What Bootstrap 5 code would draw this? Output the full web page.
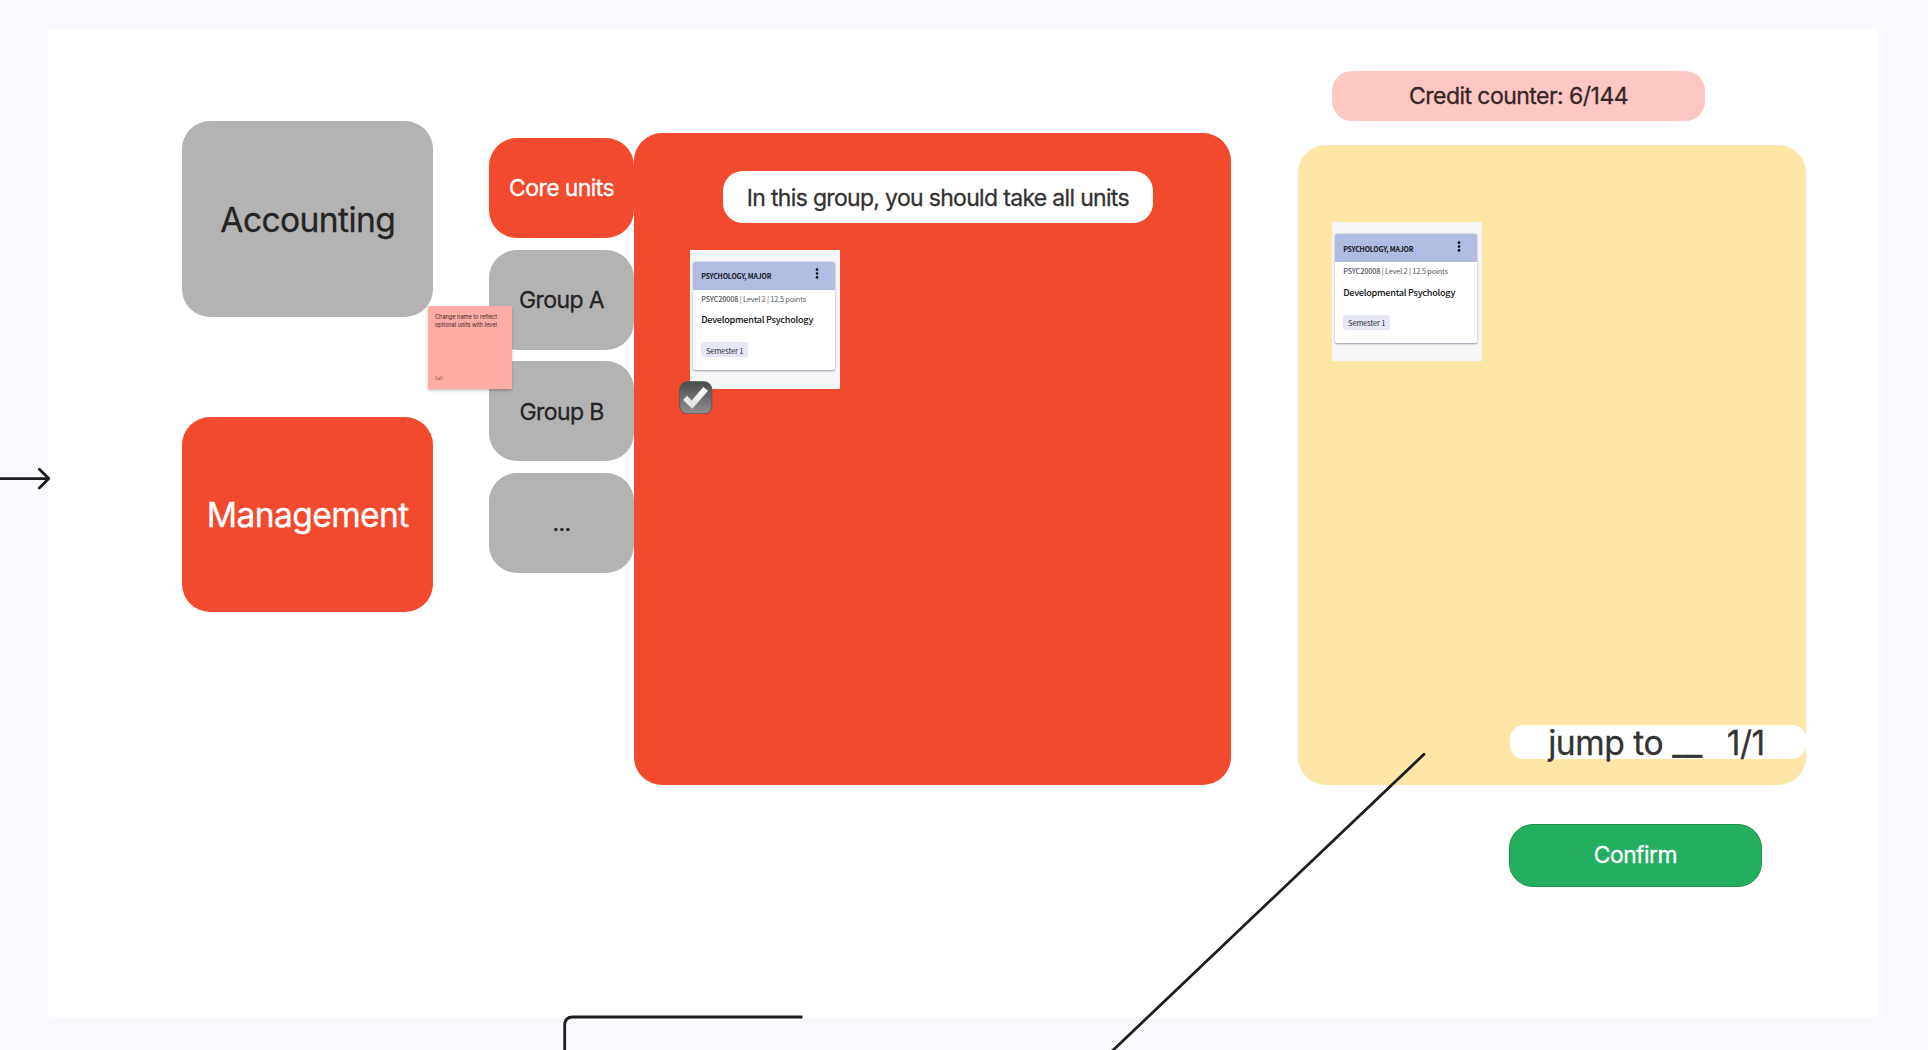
<!DOCTYPE html>
<html lang="en">
<head>
<meta charset="utf-8">
<meta name="viewport" content="width=device-width, initial-scale=1">
<title>Course planner board</title>
<link href="https://cdn.jsdelivr.net/npm/bootstrap@5.3.0/dist/css/bootstrap.min.css" rel="stylesheet">
<style>
  body { background: #faf7ff; font-family: Inter, "Liberation Sans", sans-serif; color: #242424; width: 1928px; height: 1050px; }
  .majors, .groups, .hint, .counter, .pager, .confirm { -webkit-text-stroke: .3px currentColor; }
  .board { margin: 29px 49.6px 0 48.3px; height: 988px; background: #fff; border-radius: 2px; padding-left: 134px; }
  .tile { border-radius: 28px; line-height: 1; white-space: nowrap; }
  .tile-gray { background: #b3b3b3; }
  .tile-red { background: #f24a2e; color: #fff; }
  .majors { width: 251px; margin-top: 92.3px; gap: 100.5px; }
  .majors .tile { height: 195.3px; font-size: 33.6px; letter-spacing: -.6px; padding-top: 1px; }
  .groups { width: 145px; margin: 109px 0 0 55.8px; gap: 11.3px; }
  .groups .tile { height: 100.3px; font-size: 23px; letter-spacing: -.6px; padding-top: 1.6px; }
  .units { width: 597.2px; height: 652.8px; margin-top: 103.6px; padding: 38.8px 0 0 55.6px; }
  .hint { width: 429.6px; height: 52px; margin-left: 33.4px; padding-top: 1.6px; border-radius: 20px; background: #fff; color: #333; font-size: 23px; letter-spacing: -.68px; line-height: 1; }
  .shot { width: 150.7px; height: 139.3px; background: #f6f6f7; padding: 12.3px 5.5px 0 3.5px; font-family: "Noto Sans CJK SC", sans-serif; color: #141418; }
  .units .shot { margin-top: 26.4px; }
  .unit { height: 108.3px; border-radius: 2.5px; background: #fff; box-shadow: 0 .7px 2px #68718fb0; overflow: hidden; line-height: 1; white-space: nowrap; letter-spacing: 0; }
  .unit-top { height: 28px; background: #b0bce1; padding: 1.4px 16px 0 8px; font-size: 6.9px; font-weight: 700; letter-spacing: -.16px; }
  .unit-top svg { margin-top: -6px; }
  .unit-main { padding: 6px 8px 0; }
  .unit-code { font-size: 7.3px; color: #55555b; letter-spacing: -.15px; }
  .unit-name { font-size: 9.1px; font-weight: 500; margin-top: 12px; color: #101014; letter-spacing: -.25px; }
  .unit-term { width: 47px; height: 15px; border-radius: 2.5px; background: #e7e8f5; font-size: 7.5px; margin-top: 17.8px; padding-top: 1px; color: #2b2b33; letter-spacing: -.15px; }
  .tick { left: 679px; top: 380.5px; }
  .plan { width: 508px; margin: 42px 0 0 66.5px; }
  .counter { width: 373.7px; height: 50.3px; margin-left: 33.9px; padding-top: 1.4px; border-radius: 20px; background: #ffc7c4; color: #352727; font-size: 23px; letter-spacing: -.54px; line-height: 1; }
  .basket { height: 640.3px; margin-top: 23.8px; background: #ffe6a6; border-radius: 28px; padding: 77px 0 26.3px 33.9px; }
  .pager { width: 296px; height: 34px; border-radius: 14px; background: #fff; color: #333; font-size: 33.6px; letter-spacing: -.45px; line-height: 1; padding: 1px 41px 0 38.4px; white-space: nowrap; }
  .confirm { width: 252.5px; height: 63px; margin: 38.3px 0 0 211.4px; padding: 1px 0 0; border-radius: 24px; --bs-btn-bg: #24ae5f; --bs-btn-border-color: #1f9150; --bs-btn-color: #fff; font-size: 22.8px; letter-spacing: -.5px; line-height: 1; }
  .sticky { left: 428px; top: 305.5px; width: 83.7px; height: 83.7px; background: #ffada5; box-shadow: 0 1.5px 3px rgba(0,0,0,.25); padding: 7.6px 7px 6px; font-size: 5.6px; line-height: 8.2px; color: #3a1f1f; white-space: nowrap; }
  .author { font-size: 4.2px; color: #8b5450; }
</style>
</head>
<body class="overflow-hidden position-relative">
<main class="board d-flex align-items-start">
  <nav class="majors d-flex flex-column flex-shrink-0">
    <div class="tile tile-gray d-flex align-items-center justify-content-center">Accounting</div>
    <div class="tile tile-red d-flex align-items-center justify-content-center">Management</div>
  </nav>
  <nav class="groups d-flex flex-column flex-shrink-0">
    <div class="tile tile-red d-flex align-items-center justify-content-center">Core units</div>
    <div class="tile tile-gray d-flex align-items-center justify-content-center">Group A</div>
    <div class="tile tile-gray d-flex align-items-center justify-content-center">Group B</div>
    <div class="tile tile-gray d-flex align-items-center justify-content-center">...</div>
  </nav>
  <section class="units tile tile-red flex-shrink-0">
    <div class="hint d-flex align-items-center justify-content-center">In this group, you should take all units</div>
    <div class="shot">
      <article class="unit">
        <div class="unit-top d-flex align-items-center justify-content-between"><span>PSYCHOLOGY, MAJOR</span>
          <svg width="4" height="11" viewBox="0 0 4 11"><circle cx="2" cy="1.6" r="1.3"/><circle cx="2" cy="5.5" r="1.3"/><circle cx="2" cy="9.4" r="1.3"/></svg></div>
        <div class="unit-main">
          <div class="unit-code"><span class="fw-medium">PSYC20008</span> | Level 2 | 12.5 points</div>
          <div class="unit-name">Developmental Psychology</div>
          <div class="unit-term d-flex align-items-center justify-content-center">Semester 1</div>
        </div>
      </article>
    </div>
  </section>
  <section class="plan flex-shrink-0">
    <div class="counter d-flex align-items-center justify-content-center">Credit counter: 6/144</div>
    <div class="basket d-flex flex-column justify-content-between">
      <div class="shot">
        <article class="unit">
          <div class="unit-top d-flex align-items-center justify-content-between"><span>PSYCHOLOGY, MAJOR</span>
            <svg width="4" height="11" viewBox="0 0 4 11"><circle cx="2" cy="1.6" r="1.3"/><circle cx="2" cy="5.5" r="1.3"/><circle cx="2" cy="9.4" r="1.3"/></svg></div>
          <div class="unit-main">
            <div class="unit-code"><span class="fw-medium">PSYC20008</span> | Level 2 | 12.5 points</div>
            <div class="unit-name">Developmental Psychology</div>
            <div class="unit-term d-flex align-items-center justify-content-center">Semester 1</div>
          </div>
        </article>
      </div>
      <div class="pager d-flex align-items-center justify-content-between align-self-end"><span>jump to __</span><span>1/1</span></div>
    </div>
    <button type="button" class="confirm btn d-flex align-items-center justify-content-center">Confirm</button>
  </section>
</main>

<aside class="sticky position-absolute d-flex flex-column justify-content-between">
  <div>Change name to reflect<br>optional units with level</div>
  <div class="author">Dali</div>
</aside>

<svg class="tick position-absolute" width="33.5" height="33.5" viewBox="0 0 33.5 33.5">
  <defs>
    <linearGradient id="key" x1="0" y1="0" x2="0" y2="1"><stop offset="0" stop-color="#4b4b4b"/><stop offset="1" stop-color="#909090"/></linearGradient>
    <linearGradient id="mark-fill" x1="0" y1="0" x2="0" y2="1"><stop offset="0" stop-color="#ffffff"/><stop offset="1" stop-color="#dcdcdc"/></linearGradient>
  </defs>
  <rect x=".7" y=".7" width="32.1" height="32.1" rx="7.5" fill="url(#key)" stroke="#5d5a58" stroke-width="1"/>
  <path d="M3.7 19 L8 14.5 L12.7 19.3 L24.3 5.8 L29.3 9.8 L13.3 28.2 Z" fill="url(#mark-fill)" stroke="#555" stroke-width=".4"/>
</svg>

<svg class="position-absolute top-0 start-0 pe-none" width="1928" height="1050" fill="none" stroke="#1e1e1e" stroke-width="2.8" stroke-linecap="round" stroke-linejoin="round">
  <path d="M-5 478.6H48.5M39.3 469.3L48.8 478.6L39.3 487.9"/>
  <path d="M1424 754.3L1108 1055"/>
  <path d="M802.5 1017H572.7Q564.7 1017 564.7 1025V1056" stroke-linecap="butt"/>
</svg>
<script src="https://cdn.jsdelivr.net/npm/bootstrap@5.3.0/dist/js/bootstrap.bundle.min.js"></script>
</body>
</html>
